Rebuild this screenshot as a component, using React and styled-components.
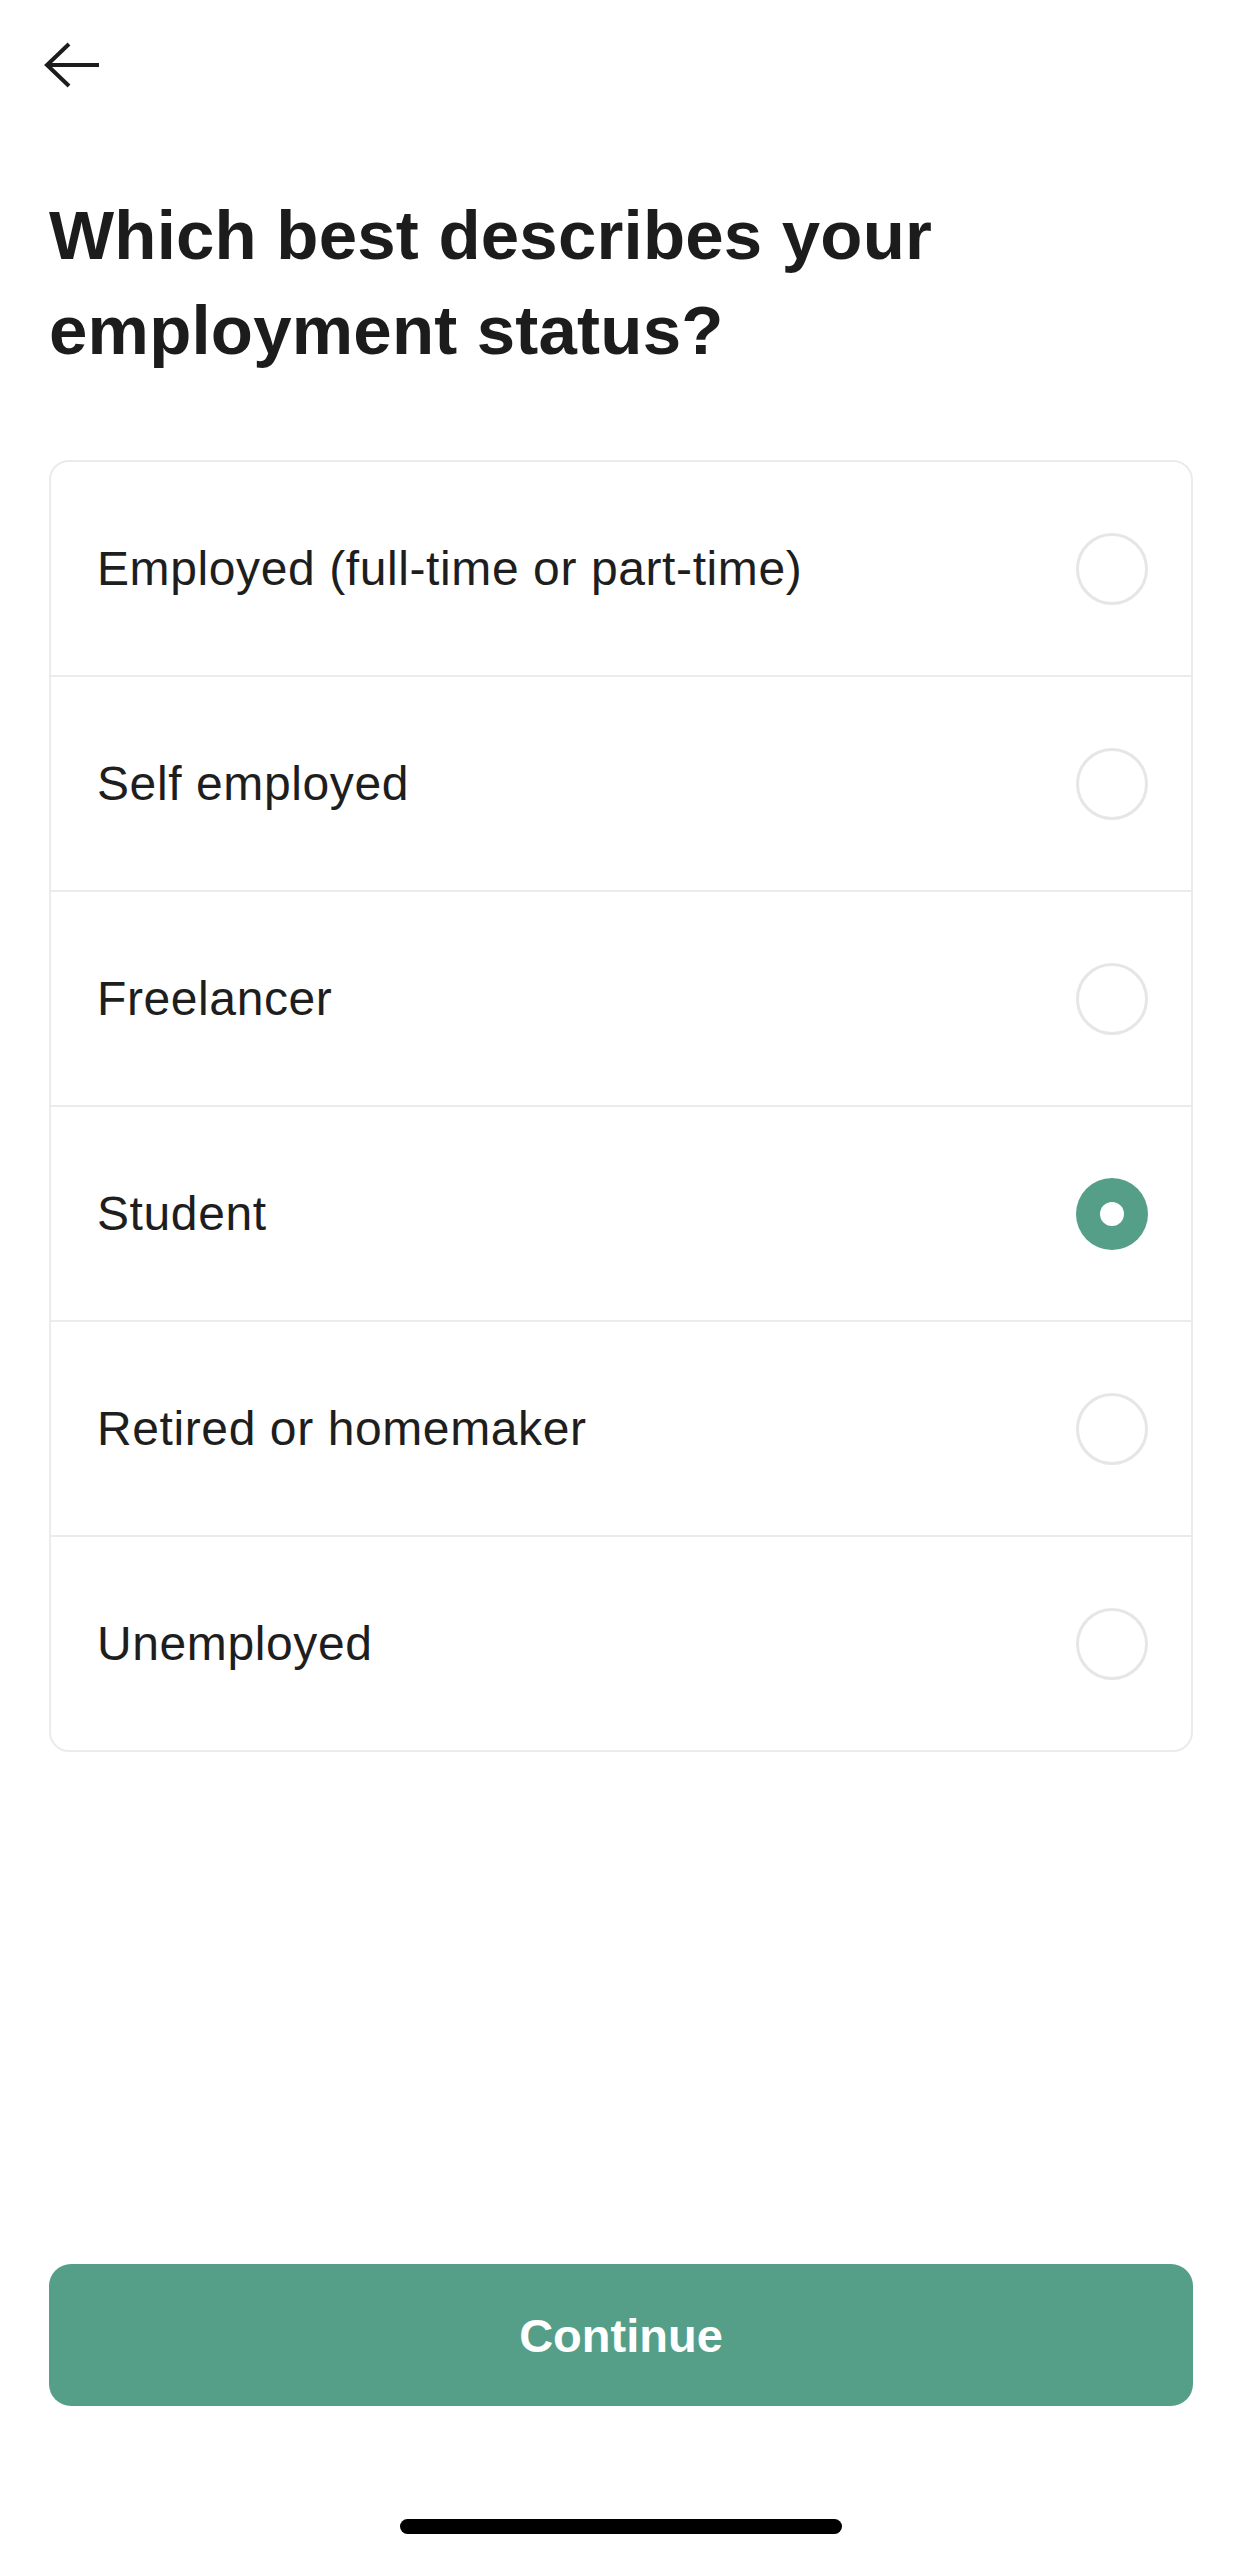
import React, { useState } from "react";
import styled, { createGlobalStyle } from "styled-components";

const GlobalStyle = createGlobalStyle`
  html, body {
    margin: 0;
    padding: 0;
    background: #ffffff;
  }
  * {
    box-sizing: border-box;
  }
`;

const Page = styled.div`
  width: 1242px;
  height: 2553px;
  padding: 0 49px;
  display: flex;
  flex-direction: column;
  font-family: "Liberation Sans", Arial, sans-serif;
  color: #1c1c1c;
  background: #ffffff;
`;

const TopBar = styled.div`
  height: 130px;
  display: flex;
  align-items: center;
`;

const BackButton = styled.button`
  border: none;
  background: none;
  padding: 0;
  margin-left: -7px;
  width: 60px;
  height: 48px;
  cursor: pointer;
  display: flex;
`;

const Title = styled.h1`
  margin: 58px 0 0 0;
  font-size: 69px;
  line-height: 95px;
  font-weight: 700;
  letter-spacing: 0.2px;
`;

const Card = styled.div`
  margin-top: 82px;
  border: 2px solid #ebebeb;
  border-radius: 20px;
  display: flex;
  flex-direction: column;
`;

const Row = styled.label`
  height: 215px;
  display: flex;
  align-items: center;
  justify-content: space-between;
  padding: 0 43px 0 46px;
  border-top: 2px solid #ebebeb;
  cursor: pointer;

  &:first-child {
    height: 213px;
    border-top: none;
  }
`;

const Label = styled.span`
  font-size: 48px;
  letter-spacing: 0.6px;
  color: #1e1e1e;
`;

const Radio = styled.span`
  width: 72px;
  height: 72px;
  border-radius: 50%;
  display: flex;
  align-items: center;
  justify-content: center;
  border: ${(p) => (p.checked ? "none" : "3px solid #e6e6e6")};
  background: ${(p) => (p.checked ? "#559f89" : "#ffffff")};

  &::after {
    content: "";
    display: ${(p) => (p.checked ? "block" : "none")};
    width: 24px;
    height: 24px;
    border-radius: 50%;
    background: #ffffff;
  }
`;

const Footer = styled.div`
  margin-top: auto;
  display: flex;
  flex-direction: column;
  align-items: center;
  padding-bottom: 19px;
`;

const ContinueButton = styled.button`
  width: 100%;
  height: 142px;
  border: none;
  border-radius: 22px;
  background: #559f89;
  color: #ffffff;
  font-family: "Liberation Sans", Arial, sans-serif;
  font-size: 47px;
  font-weight: 700;
  cursor: pointer;
`;

const HomeIndicator = styled.div`
  margin-top: 113px;
  width: 442px;
  height: 15px;
  border-radius: 8px;
  background: #000000;
`;

const options = [
  "Employed (full-time or part-time)",
  "Self employed",
  "Freelancer",
  "Student",
  "Retired or homemaker",
  "Unemployed",
];

const BackArrow = () => (
  <svg width="60" height="48" viewBox="0 0 60 48" fill="none">
    <path
      d="M57 24H5M27 3L5 24L27 45"
      stroke="#1c1c1c"
      strokeWidth="4"
    />
  </svg>
);

const App = () => {
  const [selected, setSelected] = useState("Student");

  return (
    <>
      <GlobalStyle />
      <Page>
        <TopBar>
          <BackButton aria-label="Back">
            <BackArrow />
          </BackButton>
        </TopBar>
        <Title>
          Which best describes your
          <br />
          employment status?
        </Title>
        <Card>
          {options.map((option) => (
            <Row key={option} onClick={() => setSelected(option)}>
              <Label>{option}</Label>
              <Radio checked={selected === option} />
            </Row>
          ))}
        </Card>
        <Footer>
          <ContinueButton>Continue</ContinueButton>
          <HomeIndicator />
        </Footer>
      </Page>
    </>
  );
};

export default App;
